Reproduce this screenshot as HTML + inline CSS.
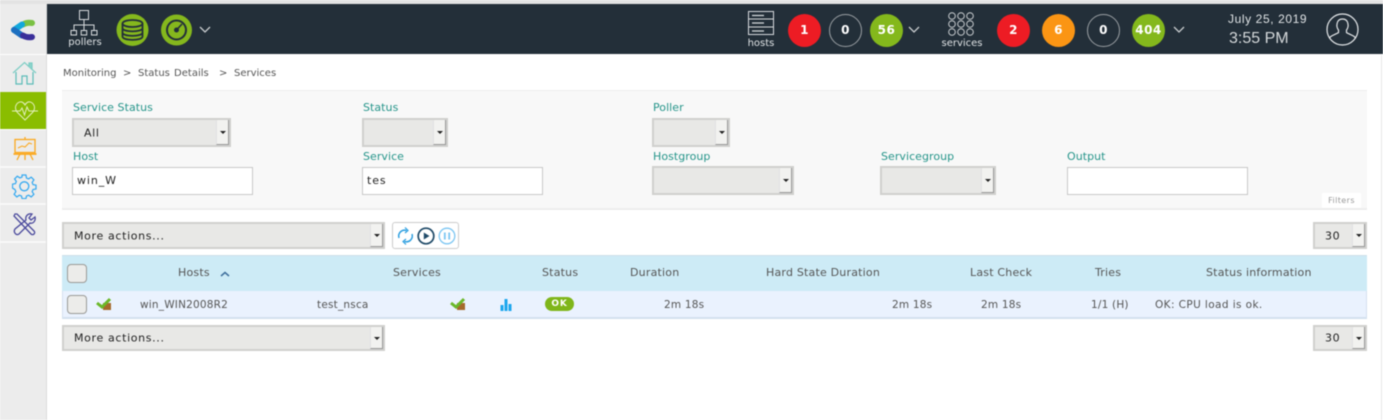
<!DOCTYPE html>
<html><head><meta charset="utf-8"><style>
html,body{margin:0;padding:0;width:1383px;height:420px;overflow:hidden;background:#fff}
body{font-family:"DejaVu Sans","Liberation Sans",sans-serif;font-size:11px;color:#555;position:relative}
#p{position:absolute;left:0;top:0;width:1383px;height:420px;overflow:hidden;filter:blur(.4px)}
.a{position:absolute;white-space:nowrap}
.l{color:#26958a;font-size:11px;letter-spacing:.05px;line-height:14px}
.sel{position:absolute;box-sizing:border-box;background:#e8e8e6;border:2px solid #d0d0ce;color:#222}
.sel i{position:absolute;right:0;top:0;bottom:0;width:13px;background:#f2f2f0;border-left:1px solid #e2e2e2;border-right:1px solid #999;border-bottom:1px solid #999;box-sizing:border-box}
.sel i:after{content:"";position:absolute;left:3px;top:50%;margin-top:-1px;border:3px solid transparent;border-top:3px solid #222;border-bottom:0}
.sel span{position:absolute;left:10px;top:50%;transform:translateY(-50%);letter-spacing:.65px;white-space:nowrap}
.inp{position:absolute;box-sizing:border-box;background:#fff;border:1px solid #c8c8c8;height:28px;color:#222;font-size:11px;line-height:26px;padding-left:4px;letter-spacing:.9px}
.c{position:absolute;width:33px;height:33px;top:14px;border-radius:50%;color:#fff;font-weight:bold;font-size:12px;line-height:33px;text-align:center;box-sizing:border-box;letter-spacing:.5px}
.o{border:1.5px solid #9a9fa3;line-height:30px;width:33px}
.cb{position:absolute;box-sizing:border-box;width:20px;height:19px;background:#ececea;border:1px solid #9a9a96;border-radius:4px}
.h{top:266px;color:#555;letter-spacing:.2px;line-height:14px}
.t{top:298px;color:#555;letter-spacing:.2px;line-height:14px;font-size:10.5px}
.w{color:#dfe3e5;font-size:10px;text-align:center;line-height:12px}
.b{top:67px;font-size:10px;line-height:14px;color:#555;word-spacing:1px}
</style></head><body><div id="p">
<!-- top -->
<div class="a" style="left:0;top:0;width:1383px;height:4px;background:#e3e3e3"></div>
<div class="a" style="left:47px;top:4px;width:1336px;height:50px;background:#232f39"></div>
<!-- sidebar -->
<div class="a" style="left:0;top:4px;width:46px;height:416px;background:#ececec;border-right:1px solid #dcdcdc"></div>
<div class="a" style="left:0;top:54px;width:46px;height:1px;background:#fff"></div>
<div class="a" style="left:0;top:92px;width:46px;height:37px;background:#8abd00"></div>
<div class="a" style="left:0;top:129px;width:46px;height:1px;background:#fff"></div>
<div class="a" style="left:0;top:166px;width:46px;height:2px;background:#f8f8f8"></div>
<div class="a" style="left:0;top:203px;width:46px;height:2px;background:#f8f8f8"></div>
<div class="a" style="left:0;top:241px;width:46px;height:2px;background:#f8f8f8"></div>
<!-- logo -->
<svg class="a" style="left:10px;top:18px" width="26" height="24" viewBox="0 0 26 24" fill="none">
<path d="M13 6.500 Q17 4 22 5" stroke="#7ac143" stroke-width="6" stroke-linecap="round"/>
<path d="M12 6.500 L4 12" stroke="#12a8dc" stroke-width="6" stroke-linecap="round"/>
<path d="M4 12 L12 17.500" stroke="#1c6fc0" stroke-width="6" stroke-linecap="round"/>
<path d="M13 17.500 Q17 20 22 19" stroke="#3a2f9a" stroke-width="6" stroke-linecap="round"/>
</svg>
<!-- home -->
<svg class="a" style="left:12px;top:61px" width="25" height="25" viewBox="0 0 25 25" fill="none" stroke="#7ccdc4" stroke-width="1.200">
<path d="M1 12 L12.500 1.500 L24 12"/><path d="M17 5V2h3v6" fill="#8ed4cc"/>
<path d="M4 11V23H10V15H15V23H21V11" stroke="#5cbcb8"/>
</svg>
<!-- heart -->
<svg class="a" style="left:12px;top:100px" width="26" height="22" viewBox="0 0 26 22" fill="none" stroke="#e4f0bd" stroke-width="1">
<path d="M13 20 L5 12 C1 6 6 1 10 2 C12 3 13 5 13 5 C13 5 14 3 16 2 C20 1 25 6 21 12 Z"/>
<path d="M0 11H8L10 8L12.500 15L15 7L17 11H26"/>
</svg>
<!-- chart -->
<svg class="a" style="left:13px;top:137px" width="24" height="24" viewBox="0 0 24 24" fill="none" stroke="#fba81e" stroke-width="1.300">
<path d="M12 0V2"/><rect x="2" y="2.500" width="20" height="13"/><path d="M5 11L9 9L12 10L16 6L19 7" stroke-width="1"/>
<path d="M0.500 17H23.500" stroke-width="1.800"/><path d="M7 17L4 23M12 17V23M17 17L20 23"/>
</svg>
<!-- gear -->
<svg class="a" style="left:12px;top:174px" width="25" height="25" viewBox="0 0 25 25" fill="none" stroke="#36a9f0" stroke-width="1.300">
<path d="M10.500 1h4l.6 3.200 2.200.9 2.700-1.800 2.800 2.800-1.800 2.700.9 2.200 3.100.6v4l-3.100.6-.9 2.200 1.800 2.700-2.800 2.800-2.700-1.800-2.200.9-.6 2.700h-4l-.6-2.700-2.200-.9-2.700 1.800-2.800-2.800 1.800-2.700-.9-2.200L.5 14.600v-4l3.100-.6.9-2.200-1.800-2.700 2.800-2.800 2.700 1.800 2.200-.9z" transform="scale(.96)"/>
<circle cx="12.300" cy="12.300" r="4.500"/>
</svg>
<!-- tools -->
<svg class="a" style="left:13px;top:213px" width="24" height="23" viewBox="0 0 24 23" fill="none" stroke="#4a499c" stroke-width="1.300">
<path d="M2 1L1 3L18 21C20 23 23 20 21 18L4 1Z"/>
<path d="M22 4L18 7L16 5L19 1C15 0 12 3 13 7L2 16C0 19 3 23 6 21L17 10C20 11 23 8 22 4Z"/>
</svg>
<!-- header left -->
<svg class="a" style="left:70px;top:10px" width="28" height="27" viewBox="0 0 28 27" fill="none" stroke="#d7dbde" stroke-width="1">
<rect x="9.500" y=".5" width="9" height="9"/><path d="M14 10V15M4 20V15H24V20M14 15V20"/>
<rect x="1" y="20.500" width="5.500" height="4.500"/><rect x="11.200" y="20.500" width="5.500" height="4.500"/><rect x="21.500" y="20.500" width="5.500" height="4.500"/>
</svg>
<div class="a w" style="left:64px;top:37px;width:42px">pollers</div>
<svg class="a" style="left:116px;top:14px" width="33" height="32" viewBox="0 0 33 32">
<circle cx="16.500" cy="16" r="16" fill="#85b81d"/>
<g fill="none" stroke="#232f39" stroke-width="1.800"><ellipse cx="16.500" cy="9.500" rx="10" ry="3.500"/><path d="M6.500 9.500V22.500C6.500 27 26.500 27 26.500 22.500V9.500M6.500 14C6.500 18.500 26.500 18.500 26.500 14M6.500 18.500C6.500 23 26.500 23 26.500 18.500"/></g>
</svg>
<svg class="a" style="left:161px;top:14px" width="31" height="32" viewBox="0 0 31 32">
<circle cx="15.500" cy="16" r="15.500" fill="#85b81d"/>
<circle cx="15.500" cy="16" r="9.500" fill="none" stroke="#232f39" stroke-width="2"/>
<circle cx="15.500" cy="16" r="2.500" fill="#232f39"/><path d="M15.500 16L21 10" stroke="#232f39" stroke-width="1.600"/>
</svg>
<svg class="a" style="left:199px;top:26px" width="12" height="8" viewBox="0 0 12 8" fill="none" stroke="#c8ccce" stroke-width="1.300"><path d="M1 1L6 6L11 1"/></svg>
<!-- hosts -->
<svg class="a" style="left:748px;top:11px" width="27" height="25" viewBox="0 0 27 25" fill="none" stroke="#d7dbde" stroke-width="1">
<rect x=".5" y=".5" width="25" height="23"/><path d="M.5 8H25.500M.5 16H25.500"/><path d="M4 4.500H16M4 12H16M4 20H16" stroke-width="1.200"/>
</svg>
<div class="a w" style="left:741px;top:38px;width:40px">hosts</div>
<div class="c" style="left:788px;background:#ed1c24">1</div>
<div class="c o" style="left:829px">0</div>
<div class="c" style="left:870px;background:#84b81c">56</div>
<svg class="a" style="left:908px;top:26px" width="12" height="8" viewBox="0 0 12 8" fill="none" stroke="#c8ccce" stroke-width="1.300"><path d="M1 1L6 6L11 1"/></svg>
<!-- services -->
<svg class="a" style="left:948px;top:12px" width="26" height="24" viewBox="0 0 26 24" fill="none" stroke="#c9cdd0" stroke-width="1">
<circle cx="4" cy="4" r="3.300"/><circle cx="13" cy="4" r="3.300"/><circle cx="22" cy="4" r="3.300"/>
<circle cx="4" cy="12" r="3.300"/><circle cx="13" cy="12" r="3.300"/><circle cx="22" cy="12" r="3.300"/>
<circle cx="4" cy="20" r="3.300"/><circle cx="13" cy="20" r="3.300"/><circle cx="22" cy="20" r="3.300"/>
</svg>
<div class="a w" style="left:935px;top:38px;width:54px">services</div>
<div class="c" style="left:997px;background:#ed1c24">2</div>
<div class="c" style="left:1042px;background:#fb9514">6</div>
<div class="c o" style="left:1087px">0</div>
<div class="c" style="left:1132px;background:#84b81c">404</div>
<svg class="a" style="left:1173px;top:26px" width="12" height="8" viewBox="0 0 12 8" fill="none" stroke="#c8ccce" stroke-width="1.300"><path d="M1 1L6 6L11 1"/></svg>
<div class="a" style="left:1228px;top:12px;color:#dfe3e5;font-family:'Liberation Sans',sans-serif;font-size:12px;letter-spacing:.6px;line-height:14px">July 25, 2019</div>
<div class="a" style="left:1229px;top:29px;color:#d4d8da;font-family:'Liberation Sans',sans-serif;font-size:16px;line-height:20px">3:55 PM</div>
<svg class="a" style="left:1326px;top:13px" width="33" height="33" viewBox="0 0 33 33" fill="none" stroke="#e4e7e9" stroke-width="1.200">
<circle cx="16.500" cy="16.500" r="15.500"/>
<path d="M3.500 25C5 22 10 21.500 12.500 19.500V17C10 14 10 6 16.500 6C23 6 23 14 20.500 17V19.500C23 21.500 28 22 29.500 25"/>
</svg>
<!-- breadcrumb -->
<div class="a b" style="left:63px">Monitoring</div>
<div class="a b" style="left:123px">&gt;</div>
<div class="a b" style="left:138px">Status Details</div>
<div class="a b" style="left:219px">&gt;</div>
<div class="a b" style="left:234px">Services</div>
<!-- filter panel -->
<div class="a" style="left:62px;top:90px;width:1305px;height:117px;background:#f8f8f8;border-top:1px solid #ededed;border-bottom:2px solid #ededed"></div>
<div class="a l" style="left:73px;top:101px">Service Status</div>
<div class="a l" style="left:363px;top:101px">Status</div>
<div class="a l" style="left:653px;top:101px">Poller</div>
<div class="sel" style="left:72px;top:118px;width:159px;height:29px"><span>All</span><i></i></div>
<div class="sel" style="left:362px;top:118px;width:86px;height:29px"><i></i></div>
<div class="sel" style="left:652px;top:118px;width:78px;height:29px"><i></i></div>
<div class="a l" style="left:73px;top:150px">Host</div>
<div class="a l" style="left:363px;top:150px">Service</div>
<div class="a l" style="left:653px;top:150px">Hostgroup</div>
<div class="a l" style="left:881px;top:150px">Servicegroup</div>
<div class="a l" style="left:1067px;top:150px">Output</div>
<div class="inp" style="left:72px;top:167px;width:181px">win_W</div>
<div class="inp" style="left:362px;top:167px;width:181px">tes</div>
<div class="sel" style="left:652px;top:166px;width:142px;height:29px"><i></i></div>
<div class="sel" style="left:880px;top:166px;width:116px;height:29px"><i></i></div>
<div class="inp" style="left:1067px;top:167px;width:181px"></div>
<div class="a" style="left:1322px;top:193px;width:39px;height:15px;background:#fff;color:#999;font-size:8px;line-height:15px;text-align:center;letter-spacing:.4px">Filters</div>
<!-- actions -->
<div class="sel" style="left:62px;top:222px;width:323px;height:27px"><span>More actions...</span><i></i></div>
<div class="a" style="left:392px;top:222px;width:67px;height:27px;box-sizing:border-box;background:#fff;border:1px solid #ccc;border-radius:3px"></div>
<svg class="a" style="left:397px;top:227px" width="17" height="18" viewBox="0 0 17 18" fill="none" stroke="#2d9fe0" stroke-width="1.500">
<path d="M2 11C0.500 6 5 2 9.500 3.500M15 7C16.500 12 12 16 7.500 14.500"/><path d="M8 .5L11 3.500L8 6M9 12L6 14.500L9 17.500" stroke-width="1.200"/>
</svg>
<svg class="a" style="left:417px;top:227px" width="18" height="18" viewBox="0 0 18 18"><circle cx="9" cy="9" r="7.800" fill="none" stroke="#1f4a68" stroke-width="1.700"/><path d="M6.800 5.500L12.500 9L6.800 12.500Z" fill="#1f4a68"/></svg>
<svg class="a" style="left:438px;top:227px" width="18" height="18" viewBox="0 0 18 18" fill="none" stroke="#7cc6f2" stroke-width="1.300"><circle cx="9" cy="9" r="7.800"/><path d="M6.800 5.500V12.500M11.200 5.500V12.500" stroke-width="1.800"/></svg>
<div class="sel" style="left:1313px;top:222px;width:54px;height:27px"><span>30</span><i></i></div>
<!-- table -->
<div class="a" style="left:62px;top:255px;width:1305px;height:36px;background:#cdebf6;border-top:1px solid #cfe0ea;box-sizing:border-box"></div>
<div class="a" style="left:62px;top:291px;width:1305px;height:28px;background:#eaf2fe;border:solid #d4e1ef;border-width:0 1px 2px 1px;box-sizing:border-box"></div>
<div class="cb" style="left:67px;top:264px"></div>
<div class="a h" style="left:178px">Hosts</div>
<svg class="a" style="left:220px;top:271px" width="10" height="6" viewBox="0 0 10 6" fill="none" stroke="#3f6f9c" stroke-width="1.500"><path d="M1 5L5 1.500L9 5"/></svg>
<div class="a h" style="left:393px">Services</div>
<div class="a h" style="left:542px">Status</div>
<div class="a h" style="left:630px">Duration</div>
<div class="a h" style="left:766px">Hard State Duration</div>
<div class="a h" style="left:970px">Last Check</div>
<div class="a h" style="left:1095px">Tries</div>
<div class="a h" style="left:1206px">Status information</div>
<div class="cb" style="left:67px;top:295px"></div>
<svg class="a" style="left:96px;top:297px" width="16" height="14" viewBox="0 0 16 14"><rect x="7" y="6" width="8" height="7" fill="#a56a2c"/><path d="M1 6L6 10L14 2" fill="none" stroke="#6bb82a" stroke-width="3"/></svg>
<div class="a t" style="left:140px">win_WIN2008R2</div>
<div class="a t" style="left:317px">test_nsca</div>
<svg class="a" style="left:450px;top:297px" width="16" height="14" viewBox="0 0 16 14"><rect x="7" y="6" width="8" height="7" fill="#a56a2c"/><path d="M1 6L6 10L14 2" fill="none" stroke="#6bb82a" stroke-width="3"/></svg>
<svg class="a" style="left:499px;top:298px" width="14" height="13" viewBox="0 0 14 13" fill="#1ea7ee"><rect x="1.500" y="7" width="3" height="6"/><rect x="5.500" y="1" width="3" height="12"/><rect x="9.500" y="6" width="3" height="7"/></svg>
<div class="a" style="left:545px;top:297px;width:29px;height:14px;background:#7fb61a;border-radius:7px;color:#fff;font-size:9px;line-height:14px;text-align:center;letter-spacing:.8px;font-weight:bold">OK</div>
<div class="a t" style="left:664px">2m 18s</div>
<div class="a t" style="left:892px">2m 18s</div>
<div class="a t" style="left:981px">2m 18s</div>
<div class="a t" style="left:1091px">1/1 (H)</div>
<div class="a t" style="left:1155px;letter-spacing:.4px">OK: CPU load is ok.</div>
<div class="sel" style="left:62px;top:325px;width:323px;height:26px"><span>More actions...</span><i></i></div>
<div class="sel" style="left:1313px;top:325px;width:54px;height:26px"><span>30</span><i></i></div>
<div class="a" style="left:1381px;top:55px;width:1px;height:365px;background:#e8e8e8"></div>
</div></body></html>
